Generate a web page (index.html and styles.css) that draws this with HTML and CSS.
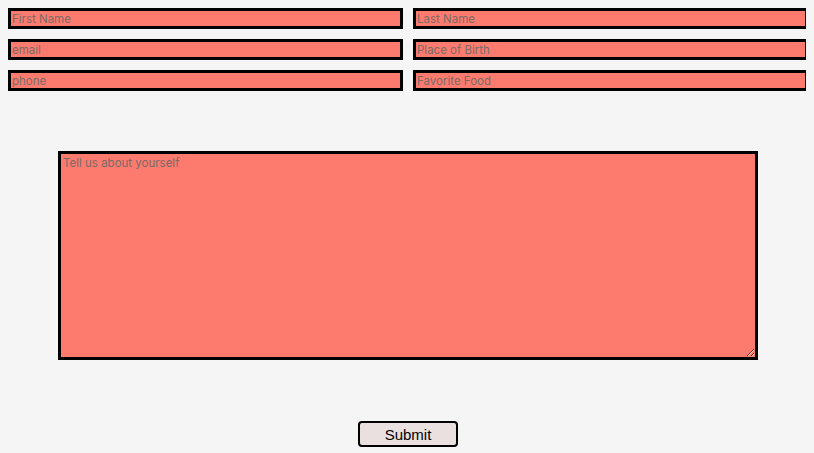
FILE: index.html
```html
<!DOCTYPE html>
<html lang="en">
<head>
    <meta charset="UTF-8">
    <meta name="viewport" content="width=device-width, initial-scale=1.0">
    <title>About You</title>
    <link rel="stylesheet" href="styles.css">
</head>
<body>
    <form id="about-form">
        <div class="field-grid">
            <input type="text" class="field" placeholder="First Name">
            <input type="text" class="field" placeholder="Last Name">
            <input type="email" class="field" placeholder="email">
            <input type="text" class="field" placeholder="Place of Birth">
            <input type="tel" class="field" placeholder="phone">
            <input type="text" class="field" placeholder="Favorite Food">
        </div>
        <textarea class="about" placeholder="Tell us about yourself"></textarea>
        <button type="submit" class="submit-button">Submit</button>
    </form>
</body>
</html>
```

FILE: styles.css
```css
body {
    margin: 8px;
    background: #f5f5f5;
    font-family: Inter, "Noto Sans", sans-serif;
}
#about-form {
    width: 800px;
    display: flex;
    flex-direction: column;
    align-items: center;
}
.field-grid {
    display: grid;
    grid-template-columns: 395px 395px;
    column-gap: 10px;
    row-gap: 10px;
    width: 100%;
}
.field,
.about {
    box-sizing: border-box;
    background: #fd7b6e;
    border: 3px solid #000;
    font-family: inherit;
    font-size: 11.5px;
    color: #333;
    margin: 0;
    outline: none;
}
.field {
    height: 21px;
    padding: 0 1px;
}
.field::placeholder,
.about::placeholder {
    color: #7a6a66;
}
.about {
    margin-top: 60px;
    width: 700px;
    height: 209px;
    padding: 2px 2px;
    resize: both;
}
.submit-button {
    margin-top: 61px;
    box-sizing: border-box;
    width: 100px;
    height: 26px;
    background: #ebe0e0;
    border: 2px solid #000;
    border-radius: 4px;
    font-family: "Liberation Sans", Arial, sans-serif;
    font-size: 15px;
    color: #000;
    padding: 0;
    cursor: pointer;
}
```
